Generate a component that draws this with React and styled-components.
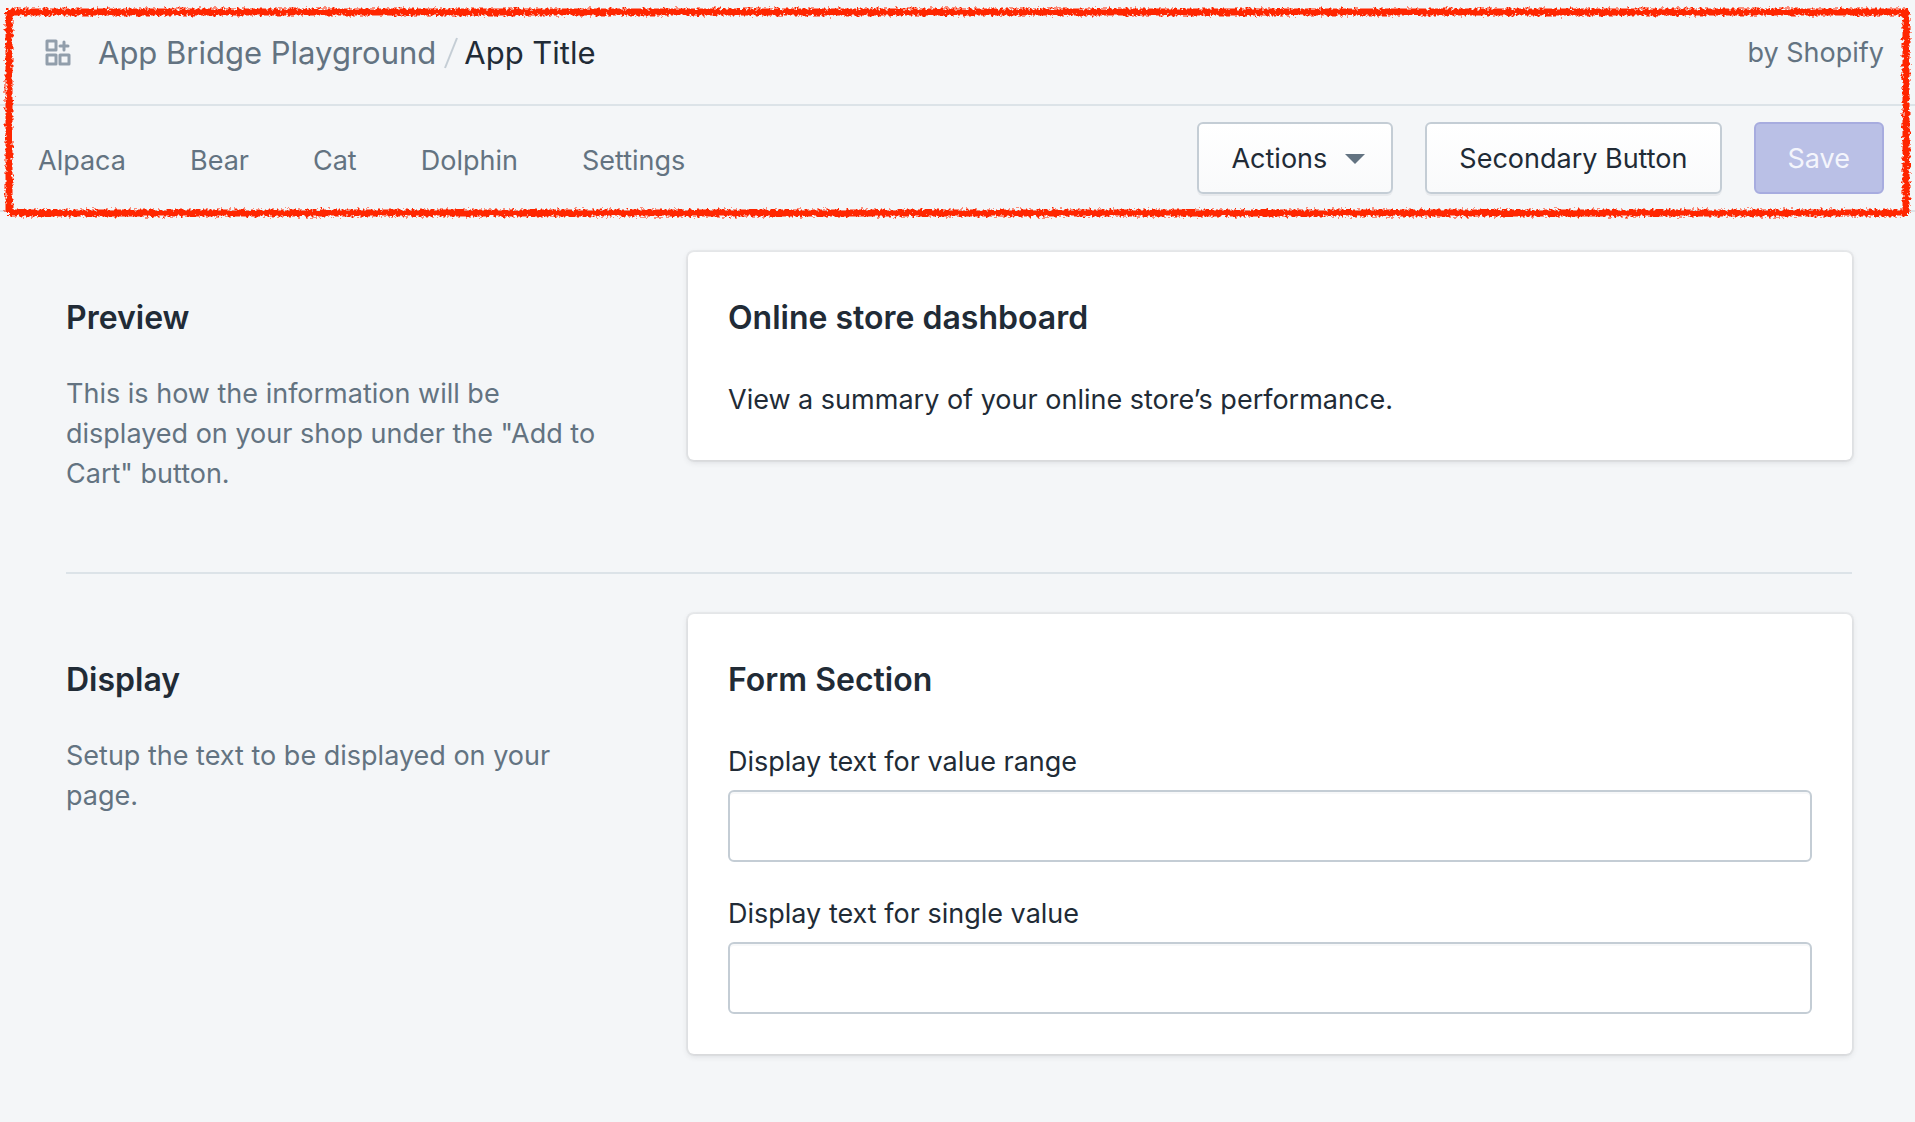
import React from "react";
import styled, { createGlobalStyle } from "styled-components";

const GlobalStyle = createGlobalStyle`
  *, *::before, *::after { box-sizing: border-box; }
  body {
    margin: 0;
    background: #f4f6f8;
    color: #212b36;
    font-family: Inter, "Liberation Sans", sans-serif;
    font-size: 27px;
    line-height: 40px;
  }
  h1, h2, h3, p { margin: 0; }
`;

const Header = styled.header`
  position: relative;
  border-bottom: 2px solid #dce3e8;
`;

const TitleBar = styled.div`
  display: flex;
  align-items: center;
  justify-content: space-between;
  height: 106px;
  padding: 2px 31px 0 44px;
  border-bottom: 2px solid #dce3e8;
  color: #637381;
`;

const Crumbs = styled.nav`
  display: flex;
  align-items: center;
  font-size: 31px;
`;

const AppIcon = styled.svg`
  width: 28px;
  height: 28px;
  margin-right: 26px;
`;

const CrumbLink = styled.a`
  color: #637381;
  text-decoration: none;
`;

const Slash = styled.svg`
  width: 14px;
  height: 32px;
  margin: 0 6px 0 8px;
`;

const AppTitle = styled.h1`
  color: #212b36;
  font-size: inherit;
  font-weight: 400;
`;

const ActionBar = styled.div`
  display: flex;
  align-items: center;
  justify-content: space-between;
  padding: 16px 31px 16px 38px;
`;

const Tabs = styled.nav`
  display: flex;
  gap: 64px;
  padding-top: 6px;
`;

const Tab = styled.a`
  color: #637381;
  text-decoration: none;
`;

const Buttons = styled.div`
  display: flex;
  gap: 32px;
`;

const Button = styled.button`
  display: flex;
  align-items: center;
  gap: 18px;
  height: 72px;
  padding: 2px ${(p) => (p.$disclosure ? "26px" : "32px")} 0 32px;
  border: 2px solid ${(p) => (p.$primary ? "#a7acdf" : "#c4cdd5")};
  border-radius: 6px;
  background: ${(p) => (p.$primary ? "#bac0e6" : "linear-gradient(#ffffff, #f9fafb)")};
  box-shadow: ${(p) => (p.$primary ? "none" : "0 2px 0 rgba(22, 29, 37, 0.05)")};
  color: ${(p) => (p.$primary ? "#f4f5fc" : "#212b36")};
  font: inherit;
`;

const Caret = styled.svg`
  width: 20px;
  height: 10px;
`;

const RoughFrame = styled.svg`
  position: absolute;
  top: 12px;
  left: 9px;
  width: calc(100% - 18px);
  height: calc(100% - 9px);
  overflow: visible;
  pointer-events: none;
`;

const Main = styled.main`
  padding: 40px 63px 68px 66px;
`;

const Section = styled.section`
  display: grid;
  grid-template-columns: minmax(0, 1fr) minmax(0, 2fr);
  align-items: start;
  column-gap: 40px;

  & + & {
    margin-top: 40px;
    padding-top: 40px;
    border-top: 2px solid #dce3e8;
  }
`;

const Annotation = styled.div`
  padding: 46px 24px 38px 0;
`;

const Heading = styled.h2`
  font-size: 32px;
  font-weight: 600;
  line-height: 40px;
`;

const Description = styled.p`
  margin-top: 36px;
  color: #637381;
`;

const Card = styled.div`
  padding: 46px 40px 40px;
  border-radius: 6px;
  background: #ffffff;
  box-shadow: 0 0 0 2px rgba(63, 63, 68, 0.05), 0 2px 6px rgba(63, 63, 68, 0.15);
`;

const Fields = styled.div`
  display: grid;
  gap: 32px;
  margin-top: 42px;
`;

const Field = styled.div`
  display: grid;
  gap: 8px;
`;

const Input = styled.input`
  width: 100%;
  height: 72px;
  padding: 0 24px;
  border: 2px solid #c4cdd5;
  border-radius: 6px;
  background: #ffffff;
  box-shadow: inset 0 2px 0 rgba(99, 115, 129, 0.05);
  color: inherit;
  font: inherit;
`;

const tabs = ["Alpaca", "Bear", "Cat", "Dolphin", "Settings"];

function Frame() {
  return (
    <RoughFrame aria-hidden="true">
      <defs>
        <filter
          id="crayon"
          filterUnits="userSpaceOnUse"
          x="-9"
          y="-12"
          width="102%"
          height="120%"
          colorInterpolationFilters="sRGB"
        >
          <feTurbulence type="fractalNoise" baseFrequency="0.35" numOctaves="2" seed="4" result="noise" />
          <feDisplacementMap in="SourceGraphic" in2="noise" scale="7" xChannelSelector="R" yChannelSelector="G" />
        </filter>
      </defs>
      <g filter="url(#crayon)" stroke="#ff2600" strokeWidth="7">
        <line x1="-3" y1="0" x2="100%" y2="0" />
        <line x1="0" y1="100%" x2="100%" y2="100%" />
        <line x1="0" y1="0" x2="0" y2="100%" />
        <line x1="100%" y1="-3" x2="100%" y2="100%" />
      </g>
    </RoughFrame>
  );
}

export default function App() {
  return (
    <>
      <GlobalStyle />
      <Header>
        <TitleBar>
          <Crumbs aria-label="Breadcrumb">
            <AppIcon viewBox="0 0 28 28" fill="none" stroke="#919eab" strokeWidth="3" strokeLinejoin="round" aria-hidden="true">
              <rect x="3" y="2" width="9" height="9" />
              <rect x="3" y="16" width="9" height="9" />
              <rect x="16" y="16" width="9" height="9" />
              <path d="M20 3v8M16 7h8" strokeLinecap="round" />
            </AppIcon>
            <CrumbLink href="#">App Bridge Playground</CrumbLink>
            <Slash viewBox="0 0 14 32" stroke="#c4cdd5" strokeWidth="2" aria-hidden="true">
              <path d="M13 1L1 31" />
            </Slash>
            <AppTitle>App Title</AppTitle>
          </Crumbs>
          <span>by Shopify</span>
        </TitleBar>
        <ActionBar>
          <Tabs aria-label="Sections">
            {tabs.map((t) => (
              <Tab key={t} href="#">{t}</Tab>
            ))}
          </Tabs>
          <Buttons>
            <Button type="button" $disclosure>
              Actions
              <Caret viewBox="0 0 20 10" aria-hidden="true">
                <path d="M0 0h20L10 10z" fill="#637381" />
              </Caret>
            </Button>
            <Button type="button">Secondary Button</Button>
            <Button type="button" $primary disabled>Save</Button>
          </Buttons>
        </ActionBar>
        <Frame />
      </Header>
      <Main>
        <Section>
          <Annotation>
            <Heading>Preview</Heading>
            <Description>
              This is how the information will be displayed on your shop under the "Add to Cart" button.
            </Description>
          </Annotation>
          <Card>
            <Heading as="h3">Online store dashboard</Heading>
            <Fields>
              <p>View a summary of your online store’s performance.</p>
            </Fields>
          </Card>
        </Section>
        <Section>
          <Annotation>
            <Heading>Display</Heading>
            <Description>Setup the text to be displayed on your page.</Description>
          </Annotation>
          <Card>
            <Heading as="h3">Form Section</Heading>
            <Fields>
              <Field>
                <label htmlFor="value-range">Display text for value range</label>
                <Input id="value-range" type="text" />
              </Field>
              <Field>
                <label htmlFor="single-value">Display text for single value</label>
                <Input id="single-value" type="text" />
              </Field>
            </Fields>
          </Card>
        </Section>
      </Main>
    </>
  );
}
